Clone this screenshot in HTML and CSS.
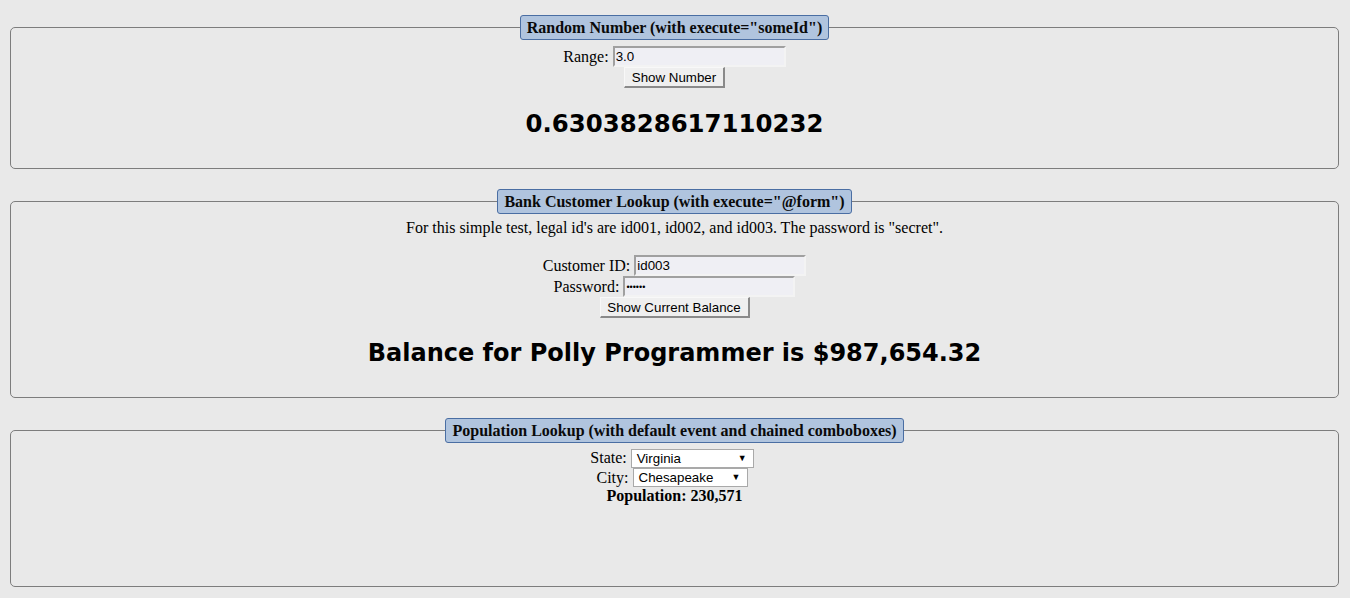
FILE: index.html
```html
<!DOCTYPE html>
<html>
<head>
<meta charset="utf-8">
<title>Ajax Examples</title>
<link rel="stylesheet" href="styles.css">
</head>
<body>
<fieldset class="box box-random">
  <legend class="legend">Random Number (with execute="someId")</legend>
  <div class="content">
    <div class="row row-range"><span class="label">Range:</span><input class="text text-range" type="text" value="3.0"></div>
    <button class="btn btn-number" type="button">Show Number</button>
    <h2 class="result result-random">0.6303828617110232</h2>
  </div>
</fieldset>

<fieldset class="box box-bank">
  <legend class="legend">Bank Customer Lookup (with execute="@form")</legend>
  <div class="content">
    <p class="note">For this simple test, legal id's are id001, id002, and id003. The password is "secret".</p>
    <div class="row row-id"><span class="label">Customer ID:</span><input class="text" type="text" value="id003"></div>
    <div class="row row-pw"><span class="label">Password:</span><input class="text text-pw" type="password" value="secret"></div>
    <button class="btn btn-balance" type="button">Show Current Balance</button>
    <h2 class="result result-bank">Balance for Polly Programmer is $987,654.32</h2>
  </div>
</fieldset>

<fieldset class="box box-pop">
  <legend class="legend">Population Lookup (with default event and chained comboboxes)</legend>
  <div class="content">
    <div class="row row-state"><span class="label">State:</span><span class="combo combo-state"><span class="combo-text">Virginia</span><span class="arrow">▼</span></span></div>
    <div class="row row-city"><span class="label">City:</span><span class="combo combo-city"><span class="combo-text">Chesapeake</span><span class="arrow">▼</span></span></div>
    <div class="pop">Population: 230,571</div>
  </div>
</fieldset>
</body>
</html>
```

FILE: styles.css
```css
html, body {
  background: #e9e9e9;
}
body {
  margin: 0;
  padding: 15px 11px 0 10px;
  font-family: "Liberation Serif", "Times New Roman", serif;
  font-size: 16px;
  color: #000;
}
.box {
  margin: 0 0 20px 0;
  padding: 0 10px;
  border: 1px solid #7d7d7d;
  border-radius: 5px;
  min-width: 0;
}
.legend {
  margin: 0 auto;
  padding: 3px 6px 2px;
  line-height: 18px;
  font-weight: bold;
  font-size: 16px;
  background: #b0c4de;
  border: 1px solid #4a6ea3;
  border-radius: 3px;
  color: #0a0a0a;
}
.content {
  display: flex;
  flex-direction: column;
  align-items: center;
}
.row {
  display: flex;
  align-items: center;
  justify-content: center;
  gap: 4px;
  height: 21px;
}
.label {
  line-height: 18px;
}
.text {
  box-sizing: border-box;
  width: 172px;
  height: 21px;
  margin: 0;
  padding: 1px 1px;
  font-family: "Liberation Sans", Arial, sans-serif;
  font-size: 13.33px;
  color: #000;
  background: #efeff4;
  border-style: solid;
  border-width: 2px;
  border-color: #a0a0a0 #f3f3f3 #f3f3f3 #a0a0a0;
  outline: none;
}
.text-range { width: 173px; }
.text-pw {
  font-size: 9px;
  letter-spacing: 0;
}
.btn {
  box-sizing: border-box;
  height: 21px;
  margin: 0;
  padding: 0;
  white-space: nowrap;
  font-family: "Liberation Sans", Arial, sans-serif;
  font-size: 13.33px;
  color: #000;
  background: #efefef;
  border-style: solid;
  border-width: 1px 2px 2px 1px;
  border-color: #f8f8f8 #8a8a8a #8a8a8a #f8f8f8;
  border-radius: 0;
}
.btn-number { width: 101px; }
.btn-balance { width: 150px; }
.result {
  margin: 0;
  font-family: Verdana, "DejaVu Sans", sans-serif;
  font-weight: bold;
  font-size: 24.4px;
  line-height: 28px;
  white-space: nowrap;
}
.result-random {
  margin-top: 22px;
  margin-bottom: 30px;
}
.row-range { margin-top: 6px; }
.note {
  margin: 5px 0 0 0;
  line-height: 18px;
}
.row-id { margin-top: 18px; }
.result-bank {
  font-size: 24px;
  margin-top: 21px;
  margin-bottom: 30px;
}
.row-state { margin-top: 5px; height: 20px; margin-right: 5px; }
.row-city { height: 19px; margin-right: 5px; }
.combo {
  box-sizing: border-box;
  display: flex;
  align-items: center;
  justify-content: space-between;
  height: 19px;
  padding: 0 6px 0 5px;
  background: #fff;
  border: 1px solid #a9a9a9;
  font-family: "Liberation Sans", Arial, sans-serif;
  font-size: 13.33px;
}
.combo-state { width: 123px; }
.combo-city { width: 115px; }
.arrow {
  font-size: 9px;
  line-height: 1;
}
.pop {
  font-weight: bold;
  line-height: 18px;
  margin-top: 0;
  margin-bottom: 81px;
}
```
